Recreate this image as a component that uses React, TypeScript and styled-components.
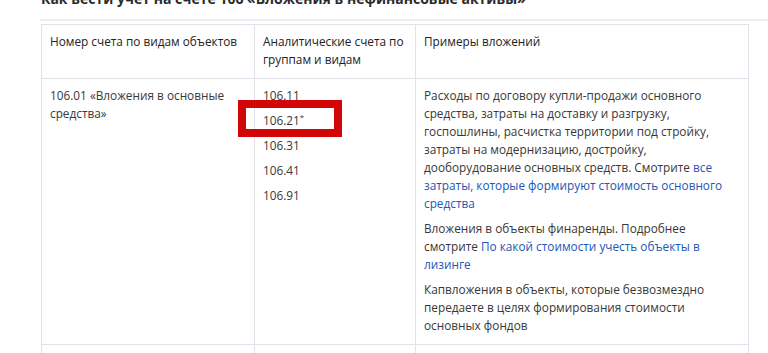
import styled, { createGlobalStyle } from "styled-components";

const GlobalStyle = createGlobalStyle`
    body {
        margin: 0;
        background: #ffffff;
        font-family: "Open Sans", "Liberation Sans", sans-serif;
        color: #333333;
    }
`;

const Page = styled.div`
    padding-left: 41px;
    overflow: hidden;
    height: 353px;
`;

const Heading = styled.h2`
    margin: -12px 0 0;
    font-size: 14px;
    line-height: 22px;
    font-weight: 700;
    color: #2b2b2b;
    white-space: nowrap;
`;

const Divider = styled.div`
    height: 2px;
    margin: 9px 0 3px -1px;
    background: #eeeef0;
`;

const Table = styled.table`
    width: 707px;
    border-collapse: collapse;
    table-layout: fixed;
    font-size: 11.8px;
    line-height: 18px;
`;

const HeadCell = styled.th<{ $width: number }>`
    box-sizing: border-box;
    width: ${(p) => p.$width}px;
    padding: 7px 8px 10px;
    border: 1px solid #e1e1ea;
    text-align: left;
    vertical-align: top;
    font-weight: 400;
    color: #222222;
`;

const Cell = styled.td`
    box-sizing: border-box;
    padding: 7px 8px 10px;
    border: 1px solid #e1e1ea;
    vertical-align: top;
    color: #383838;
`;

const Para = styled.p`
    margin: 0 0 7px;

    &:last-child {
        margin-bottom: 0;
    }
`;

const Account = styled.div<{ $marked?: boolean }>`
    position: relative;
    margin-bottom: 7px;

    ${(p) =>
        p.$marked &&
        `
        &::after {
            content: "";
            position: absolute;
            left: -25px;
            top: -11px;
            width: 88px;
            height: 21px;
            border: 8px solid #d20606;
        }
    `}
`;

const Star = styled.sup`
    font-size: 8px;
    line-height: 0;
    vertical-align: 5px;
`;

const Link = styled.a`
    color: #2257b5;
    text-decoration: none;
`;

const EmptyRow = styled.tr`
    height: 30px;
`;

const accounts = ["106.11", "106.21", "106.31", "106.41", "106.91"];

export default function App() {
    return (
        <Page>
            <GlobalStyle />
            <Heading>Как вести учет на счете 106 «Вложения в нефинансовые активы»</Heading>
            <Divider />
            <Table>
                <thead>
                    <tr>
                        <HeadCell $width={213}>Номер счета по видам объектов</HeadCell>
                        <HeadCell $width={161}>Аналитические счета по группам и видам</HeadCell>
                        <HeadCell $width={333}>Примеры вложений</HeadCell>
                    </tr>
                </thead>
                <tbody>
                    <tr>
                        <Cell>106.01 «Вложения в основные средства»</Cell>
                        <Cell>
                            {accounts.map((a) => (
                                <Account key={a} $marked={a === "106.21"}>
                                    {a}
                                    {a === "106.21" && <Star>*</Star>}
                                </Account>
                            ))}
                        </Cell>
                        <Cell>
                            <Para>
                                Расходы по договору купли-продажи основного средства, затраты на доставку и
                                разгрузку, госпошлины, расчистка территории под стройку, затраты на модернизацию,
                                достройку, дооборудование основных средств. Смотрите{" "}
                                <Link href="#">все затраты, которые формируют стоимость основного средства</Link>
                            </Para>
                            <Para>
                                Вложения в объекты финаренды. Подробнее смотрите{" "}
                                <Link href="#">По какой стоимости учесть объекты в лизинге</Link>
                            </Para>
                            <Para>
                                Капвложения в объекты, которые безвозмездно передаете в целях формирования
                                стоимости основных фондов
                            </Para>
                        </Cell>
                    </tr>
                    <EmptyRow>
                        <Cell />
                        <Cell />
                        <Cell />
                    </EmptyRow>
                </tbody>
            </Table>
        </Page>
    );
}
